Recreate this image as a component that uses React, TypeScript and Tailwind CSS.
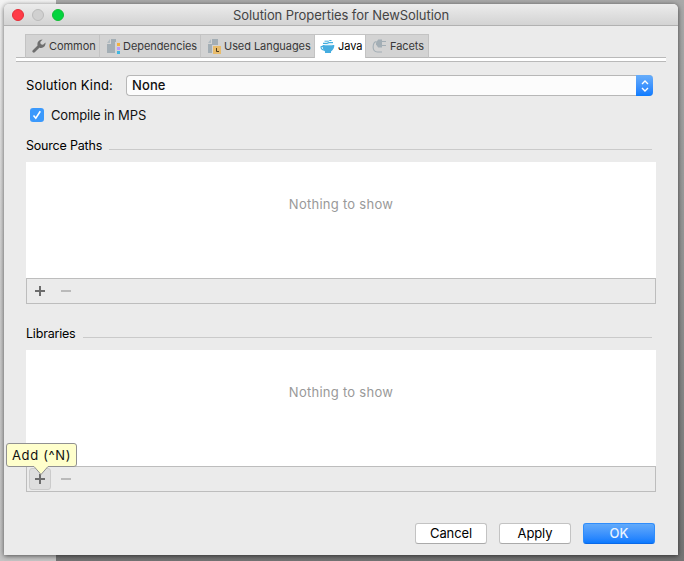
import React from "react";

type TabProps = {
  label: string;
  icon: React.ReactNode;
  width: string;
  active?: boolean;
};

function Wrench() {
  return (
    <svg width="14" height="14" viewBox="0 0 14 14" className="shrink-0">
      <path d="M1.8 12.2 7.6 6.4" stroke="#6e6e6e" strokeWidth="2.8" strokeLinecap="round" />
      <path d="M5.6 6.6C4.9 3.8 6.6.6 10.6.6L8.3 3l.4 2.3 2.3.4 2.5-2.2c.3 3.8-2.7 6.2-5.8 5.2z" fill="#6e6e6e" />
    </svg>
  );
}

function Dependencies() {
  return (
    <svg width="14" height="15" viewBox="0 0 14 15" className="shrink-0">
      <path d="M5 0h5v3H9v11H1V5h4z" fill="#a3aeb5" />
      <path d="M4 0v4H1z" fill="#b1bbc1" />
      <path d="M11 4h3v3h-3z" fill="#f4af3d" />
      <path d="M11 8h3v3h-3z" fill="#b99bf8" />
      <path d="M11 12h3v3h-3z" fill="#40b6e0" />
    </svg>
  );
}

function Languages() {
  return (
    <svg width="14" height="15" viewBox="0 0 14 15" className="shrink-0">
      <path d="M5 0h6v6H5v8H1V5h4z" fill="#a3aeb5" />
      <path d="M4 0v4H1z" fill="#b1bbc1" />
      <path d="M6 7h8v8H6z" fill="#e8bc6c" />
      <path d="M9.500 9v3.500H12" fill="none" stroke="#4c3b1e" />
    </svg>
  );
}

function Cup() {
  return (
    <svg width="15" height="14" viewBox="0 0 15 14" className="shrink-0" fill="none" stroke="#40aee0">
      <path d="M4.500 1.200h4l1-.7h2" strokeWidth="1" />
      <path d="M3 3.400h4l2-.8h4" strokeWidth="1.200" />
      <path d="M2.500 5h11.800c.2 3-1.300 5-3.300 6.500V13H5v-1.500C3.300 10 2.400 8 2.500 5z" fill="#45ade0" stroke="none" />
      <path d="M3.500 6.500H1.200C.6 8.300 1.800 10 4.500 10.200" strokeWidth="1.2" />
      <path d="M4.500 5h8" stroke="#c5e6f5" strokeWidth=".8" />
    </svg>
  );
}

function Plug() {
  return (
    <svg width="15" height="14" viewBox="0 0 15 14" className="shrink-0" fill="none" stroke="#a3aeb5">
      <path d="M4.500 2.500C.5 3.200-.8 13 5.500 13H10" strokeWidth="1.100" />
      <path d="M4 3.500 6.200.5H10v8H6.200L4 5.500z" fill="#a3aeb5" stroke="none" />
      <path d="M10 2.500h4M10 6.500h4" />
    </svg>
  );
}

function Tab({ label, icon, width, active }: TabProps) {
  return (
    <div
      className={`flex h-6 shrink-0 items-center border-t border-r border-[#c3c3c3] text-[11px] tracking-[-0.06px] ${width} ${
        active
          ? "gap-[3px] bg-white pl-[5px] text-black"
          : "gap-[3px] border-b border-b-[#b9b9b9] bg-[#d3d3d3] pl-[6px] text-[#383838]"
      }`}
    >
      {icon}
      <span className="whitespace-nowrap">{label}</span>
    </div>
  );
}

function PathSection({ title, hovered }: { title: string; hovered?: boolean }) {
  return (
    <section>
      <div className="flex h-4 items-center gap-[7px] pr-1">
        <h2 className="text-[12.5px] leading-4 tracking-[-0.2px]">{title}</h2>
        <div className="mt-[7px] h-px flex-1 bg-[#cacaca]" />
      </div>
      <div className="mt-2 flex h-[116px] justify-center bg-white pt-[34px] text-[13px] leading-4 tracking-[0.27px] text-[#999]">
        Nothing to show
      </div>
      <div className="flex h-[26px] items-center border border-[#bdbdbd] pl-[2px]">
        <div
          className={`flex size-[22px] items-center justify-center rounded-[3px] ${
            hovered ? "border border-[#cbcbcb] bg-[#dedede]" : ""
          }`}
        >
          <svg width="10" height="10" viewBox="0 0 10 10">
            <path d="M4 0h2v4h4v2H6v4H4V6H0V4h4z" fill="#6c6c6c" />
          </svg>
        </div>
        <div className="ml-[10px] h-[2px] w-[10px] bg-[#bababa]" />
      </div>
    </section>
  );
}

function Button({ label, primary }: { label: string; primary?: boolean }) {
  return (
    <button
      className={`h-[21px] w-[72px] rounded-[3px] border text-[13px] leading-[19px] ${
        primary
          ? "border-[#2f8dfb] border-b-[#0a69e8] bg-linear-to-b from-[#62aafa] to-[#087aff] font-medium text-[#eaf3ff]"
          : "border-[#c3c3c3] border-b-[#aaa] bg-white tracking-[-0.1px] text-black"
      }`}
    >
      {label}
    </button>
  );
}

export default function App() {
  return (
    <div className="relative h-[561px] w-[684px] overflow-hidden bg-[#8c8c8c] pt-1 pl-1 font-['Inter','Liberation_Sans',sans-serif] text-black">
      <div className="absolute inset-0 bg-linear-to-b from-[#a9a9a9] via-[#909090] to-[#747474]" />
      <div className="absolute inset-y-0 left-0 w-14 bg-linear-to-b from-[#f3f3f3] via-[#d0d0d0] to-[#c4c4c4]" />

      <div className="relative h-[551px] w-[674px] rounded-t-[5px] bg-[#ebebeb] shadow-[0_1px_5px_rgba(0,0,0,0.6)]">
        <header className="relative flex h-[22px] items-center rounded-t-[5px] border-b border-[#b1b1b1] bg-linear-to-b from-[#ececec] to-[#d3d3d3] pl-2">
          <div className="flex gap-2">
            <span className="size-3 rounded-full border border-[#e52d38] bg-[#ff3b47]" />
            <span className="size-3 rounded-full border border-[#bbb] bg-[#d0d0d0]" />
            <span className="size-3 rounded-full border border-[#12bd35] bg-[#03d43f]" />
          </div>
          <h1 className="ml-[169px] pt-px text-[13px] leading-4 tracking-[-0.08px] text-[#444]">
            Solution Properties for NewSolution
          </h1>
        </header>

        <nav className="mx-3 flex h-9 items-end border-b border-[#b9b9b9]">
          <div className="flex h-[27px] w-full items-start border-b-3 border-white">
            <div className="h-6 w-[9px] border-b border-[#b9b9b9]" />
            <div className="h-6 w-px bg-[#c3c3c3]" />
            <Tab label="Common" icon={<Wrench />} width="w-[74px]" />
            <Tab label="Dependencies" icon={<Dependencies />} width="w-[101px]" />
            <Tab label="Used Languages" icon={<Languages />} width="w-[114px]" />
            <Tab label="Java" icon={<Cup />} width="w-[51px]" active />
            <Tab label="Facets" icon={<Plug />} width="w-[63px]" />
            <div className="h-6 flex-1 border-b border-[#b9b9b9]" />
          </div>
        </nav>

        <main className="px-[22px]">
          <div className="mt-[13px] flex h-[21px] pr-[3px]">
            <label className="w-[100px] text-[13px] leading-[21px] tracking-[0.14px]">Solution Kind:</label>
            <div className="flex flex-1 rounded-[4px] border border-r-0 border-[#b7b7b7] bg-[#fcfcfc] pl-[5px]">
              <span className="flex-1 text-[13px] leading-[19px] font-medium tracking-[0.1px] text-[#111]">None</span>
              <span className="-my-px flex w-[17px] items-center justify-center rounded-r-[4px] bg-linear-to-b from-[#67adfa] to-[#087bff]">
                <svg width="8" height="12" viewBox="0 0 8 12" fill="none" stroke="white" strokeWidth="1.4">
                  <path d="M1 4l3-3 3 3M1 8l3 3 3-3" />
                </svg>
              </span>
            </div>
          </div>

          <div className="mt-3 flex h-[14px] items-center gap-[7px] pl-1">
            <span className="flex size-[14px] items-center justify-center rounded-[3px] bg-[#3b99fc]">
              <svg width="10" height="10" viewBox="0 0 10 10" fill="none" stroke="white" strokeWidth="1.6">
                <path d="M1.5 5.5l2.3 2.7L8.3 1.3" />
              </svg>
            </span>
            <span className="text-[13px] leading-4 tracking-[-0.14px] text-[#111]">Compile in MPS</span>
          </div>

          <div className="mt-4">
            <PathSection title="Source Paths" />
          </div>
          <div className="mt-[22px]">
            <PathSection title="Libraries" hovered />
          </div>

          <footer className="mt-[31px] flex justify-end gap-3 pr-px">
            <Button label="Cancel" />
            <Button label="Apply" />
            <Button label="OK" primary />
          </footer>
        </main>
      </div>

      <div className="absolute top-[443px] left-[6px] h-6 w-[71px] rounded-[3px] border border-[#919191] bg-[#ffffcc] pl-[5px] text-[13px] leading-[23px] tracking-[0.65px] whitespace-nowrap text-[#111]">
        Add (^N)
        <svg className="absolute top-[21px] left-[26px]" width="16" height="11" viewBox="0 0 16 11">
          <path d="M1 0v1.500L8 9.500l7-8V0z" fill="#ffffcc" />
          <path d="M1 1.500l7 8 7-8" fill="none" stroke="#919191" />
        </svg>
      </div>
    </div>
  );
}
